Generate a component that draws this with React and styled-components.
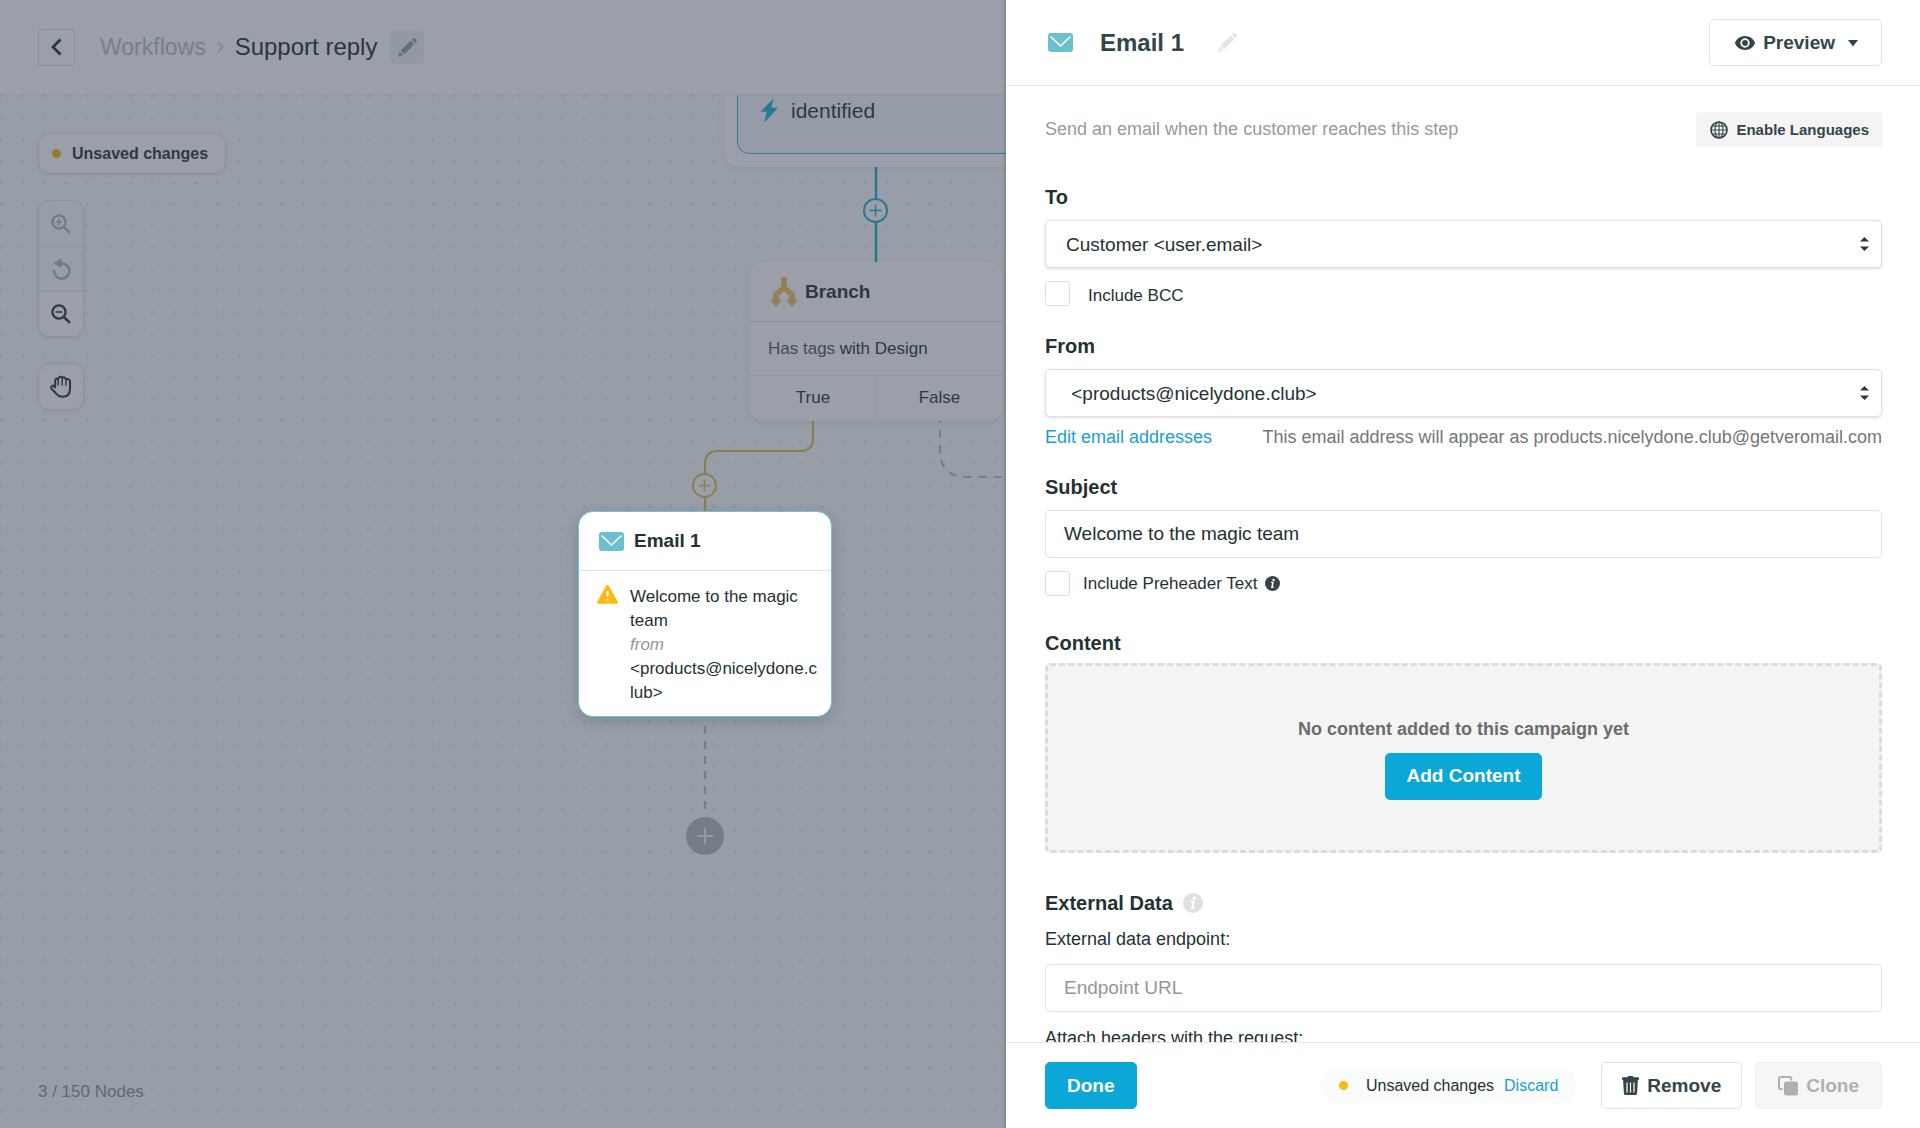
import React, { useState } from 'react'
import styled, { createGlobalStyle } from 'styled-components'

const GlobalStyle = createGlobalStyle`
  * { box-sizing:border-box; }
  body {
    margin:0;
    font-family:"Liberation Sans", Arial, Helvetica, sans-serif;
    color:#243133;
    background-color:#fff;
  }
  button, input, select { font-family:inherit; color:inherit; }
  button { cursor:pointer; }
`
const Page = styled.div`
  display:grid;
  grid-template-columns:503fr 457fr;
  height:100vh;
  overflow:hidden;
`

/* ---------- workflow side ---------- */
const Workflow = styled.main`
  position:relative;
  display:flex;
  flex-direction:column;
  min-width:0;
  overflow:hidden;
`
const Scrim = styled.div`
  position:absolute;
  inset:0;
  z-index:1;
  background-color:rgba(53,63,83,0.5);
`
const TopBar = styled.header`
  display:flex;
  align-items:center;
  height:95px;
  flex:none;
  padding:0 38px;
  background-color:#fff;
  border-bottom:1px solid #eceff0;
  box-shadow:0 1px 3px rgba(0,0,0,0.08);
`
const BackButton = styled.button`
  display:flex;
  align-items:center;
  justify-content:center;
  width:37px;
  height:37px;
  padding:0;
  background-color:#fff;
  border:1px solid #dcdfe0;
  border-radius:3px;
`
const Crumbs = styled.nav`
  display:flex;
  align-items:center;
  gap:11px;
  margin-left:25px;
  font-size:24px;
  line-height:32px;
`
const CrumbLink = styled.a`
  font-size:23px;
  color:#babec0;
  text-decoration:none;
`
const CrumbTitle = styled.span`
  color:#1c2a2c;
`
const EditButton = styled.button`
  display:flex;
  align-items:center;
  justify-content:center;
  width:34px;
  height:33px;
  margin-left:13px;
  padding:0;
  background-color:#f0f2f3;
  border:0;
  border-radius:4px;
  color:#9b9fa2;
`
const Canvas = styled.section`
  position:relative;
  flex:1;
  display:flex;
  flex-direction:column;
  align-items:flex-start;
  padding:38px 38px 16px 38px;
  background-color:#f9fdfd;
  overflow:hidden;
`
const Backdrop = styled.svg`
  position:absolute;
  top:0;
  left:0;
  width:100%;
  height:100%;
`
const Tools = styled.div`
  position:relative;
  flex:1;
  display:flex;
  flex-direction:column;
  align-items:flex-start;
  gap:26px;
`
const Status = styled.div`
  display:flex;
  align-items:center;
  gap:11px;
  height:41px;
  padding:0 17px 0 13px;
  background-color:#fff;
  border:1px solid #e0e4e6;
  border-radius:12px;
  box-shadow:0 1px 4px rgba(0,0,0,0.12);
  font-size:16px;
  font-weight:bold;
`
const Dot = styled.i`
  width:9px;
  height:9px;
  border-radius:50%;
  background-color:#fdb913;
`
const ToolGroup = styled.div`
  display:flex;
  flex-direction:column;
  width:46px;
  background-color:#fff;
  border:1px solid #e0e4e6;
  border-radius:12px;
  box-shadow:0 1px 4px rgba(0,0,0,0.12);
  overflow:hidden;
`
const ToolButton = styled.button`
  display:flex;
  align-items:center;
  justify-content:center;
  height:45px;
  padding:0;
  background-color:${props => props.disabled ? '#f9fcfc' : '#fff'};
  color:${props => props.disabled ? '#b2b6b9' : '#243133'};
  border:0;
  & + & { border-top:1px solid #e3e7e9; }
`
const NodeCount = styled.p`
  margin:auto 0 0 0;
  font-size:17px;
  line-height:40px;
  color:#8c9195;
`
const Node = styled.article`
  position:absolute;
  left:${props => props.$x}px;
  top:${props => props.$y}px;
  width:${props => props.$w || 254}px;
  z-index:${props => props.$active ? 2 : 0};
  background-color:#fff;
  border:1px solid ${props => props.$active ? '#6cc3d1' : '#fff'};
  border-radius:15px;
  box-shadow:${props => props.$active ? '0 4px 14px rgba(30,40,60,0.2)' : '0 2px 8px rgba(0,0,0,0.08)'};
`
const NodeHead = styled.h3`
  display:flex;
  align-items:center;
  gap:${props => props.$gap}px;
  height:59px;
  margin:0;
  padding:0 20px;
  border-bottom:1px solid #dde2e4;
  font-size:19px;
`
const NodeText = styled.p`
  margin:0;
  padding:0 18px;
  font-size:17px;
  line-height:53px;
  border-bottom:1px solid #e6eaec;
`
const Light = styled.span`
  color:#4c5759;
`
const Exits = styled.div`
  display:grid;
  grid-template-columns:1fr 1fr;
  font-size:17px;
  line-height:44px;
  text-align:center;
`
const Exit = styled.span`
  & + & { border-left:1px solid #e6eaec; }
`
const TriggerBox = styled.div`
  display:flex;
  align-items:center;
  gap:12px;
  height:99px;
  margin:0 12px;
  padding:12px 24px 0 22px;
  background-color:#f4f9fb;
  border:1px solid #45b4d2;
  border-radius:12px;
  font-size:21px;
`
const Trigger = styled(Node)`
  padding-bottom:12px;
`
const NodeBody = styled.div`
  display:flex;
  align-items:flex-start;
  gap:12px;
  padding:14px 13px 11px 18px;
  font-size:17px;
  line-height:24px;
`
const NodeCopy = styled.p`
  flex:1;
  min-width:0;
  margin:0;
  overflow-wrap:anywhere;
`
const From = styled.em`
  display:block;
  color:#8f9697;
`

/* ---------- panel side ---------- */
const Panel = styled.aside`
  position:relative;
  z-index:3;
  display:flex;
  flex-direction:column;
  min-width:0;
  min-height:0;
  background-color:#fff;
  box-shadow:-1px 0 3px rgba(30,40,60,0.3);
`
const PanelHead = styled.header`
  display:flex;
  align-items:center;
  flex:none;
  height:86px;
  padding:0 38px 0 42px;
  border-bottom:1px solid #e6e9e9;
`
const PanelTitle = styled.h2`
  margin:0 34px 0 27px;
  font-size:24px;
  color:#34454a;
`
const IconButton = styled.button`
  display:flex;
  padding:0;
  background:none;
  border:0;
  color:#e2e4e8;
`
const Button = styled.button`
  display:flex;
  align-items:center;
  justify-content:center;
  gap:8px;
  height:47px;
  padding:0 ${props => props.$primary ? 21 : 20}px;
  background-color:${props => props.$primary ? '#0ba7d6' : '#fff'};
  color:${props => props.$primary ? '#fff' : '#34454a'};
  border:1px solid ${props => props.$primary ? '#0ba7d6' : '#dfe2e3'};
  border-radius:5px;
  font-size:19px;
  font-weight:bold;
  &:disabled {
    padding:0 22px;
    background-color:#f6f6f6;
    border-color:#eeeeee;
    color:#b0b0b0;
  }
`
const PreviewButton = styled(Button)`
  margin-left:auto;
  padding:0 20px 0 25px;
`
const SmallButton = styled.button`
  display:flex;
  align-items:center;
  gap:8px;
  height:35px;
  padding:0 13px 0 14px;
  background-color:#f4f4f4;
  border:0;
  border-radius:3px;
  color:#34454a;
  font-size:15px;
  font-weight:bold;
`
const PanelBody = styled.form`
  flex:1;
  min-height:0;
  padding:26px 38px 0 39px;
  overflow-y:auto;
  scrollbar-width:none;
`
const Intro = styled.div`
  display:flex;
  align-items:center;
  justify-content:space-between;
  margin-bottom:38px;
  font-size:18px;
  color:#949b9c;
`
const Field = styled.div`
  display:flex;
  flex-direction:column;
  margin-bottom:${props => props.$space}px;
`
const Label = styled.label`
  display:flex;
  align-items:center;
  gap:8px;
  margin-bottom:11px;
  font-size:20px;
  font-weight:bold;
  line-height:24px;
`
const SubLabel = styled.label`
  display:block;
  margin:0 0 13px 0;
  font-size:18px;
  line-height:24px;
`
const SelectWrap = styled.div`
  display:grid;
  align-items:center;
  & > * { grid-area:1 / 1; }
  & > svg {
    justify-self:end;
    margin-right:13px;
    pointer-events:none;
  }
`
const Select = styled.select`
  appearance:none;
  width:100%;
  height:48px;
  padding:0 40px 0 20px;
  background-color:#fff;
  border:1px solid #dde1e2;
  border-radius:5px;
  box-shadow:0 1px 3px rgba(0,0,0,0.14);
  font-size:19px;
`
const Input = styled.input`
  width:100%;
  height:48px;
  padding:0 18px;
  background-color:#fff;
  border:1px solid #dfe1e2;
  border-radius:5px;
  font-size:19px;
  &::placeholder {
    color:#8f9899;
    opacity:1;
  }
`
const CheckRow = styled.div`
  display:flex;
  align-items:${props => props.$align || 'center'};
  gap:${props => props.$gap}px;
  height:25px;
  margin-top:13px;
  font-size:17px;
`
const Checkbox = styled.input`
  appearance:none;
  width:25px;
  height:25px;
  margin:0;
  background-color:#fff;
  border:1px solid #dcdfe1;
  border-radius:3px;
  &:checked { background-color:#0ba7d6; }
`
const CheckLabel = styled.label`
  display:flex;
  align-items:center;
  gap:7px;
`
const Hint = styled.div`
  display:flex;
  justify-content:space-between;
  margin-top:8px;
  font-size:18px;
  line-height:24px;
  color:#747676;
`
const TextLink = styled.a`
  color:#1a9fd0;
  text-decoration:none;
`
const Heading = styled.h3`
  display:flex;
  align-items:center;
  gap:10px;
  margin:0 0 ${props => props.$space}px 0;
  font-size:20px;
  line-height:24px;
`
const EmptyContent = styled.div`
  display:flex;
  flex-direction:column;
  align-items:center;
  justify-content:center;
  gap:12px;
  height:190px;
  margin-bottom:38px;
  background-color:#f4f4f4;
  border:3px dashed #dcdcdc;
  border-radius:5px;
`
const EmptyText = styled.p`
  margin:0;
  font-size:18px;
  font-weight:bold;
  line-height:24px;
  color:#6c6c6c;
`
const PanelFoot = styled.footer`
  display:flex;
  align-items:center;
  gap:13px;
  flex:none;
  height:86px;
  padding:0 38px 0 39px;
  border-top:1px solid #e4e9ea;
`
const Unsaved = styled.div`
  display:flex;
  align-items:center;
  height:35px;
  margin:0 12px 0 auto;
  padding:0 18px;
  background-color:#fafbfb;
  border-radius:17px;
  font-size:16px;
`
const UnsavedText = styled.span`
  margin:0 10px 0 18px;
`

/* ---------- icons ---------- */
const Envelope = () => (
  <svg width="25" height="19" viewBox="0 0 25 19" aria-hidden="true">
    <rect width="25" height="19" rx="3" fill="#6cc0ce"/>
    <path d="M3 4l9.500 9L22 4" fill="none" stroke="#fff" strokeWidth="1.600" strokeLinecap="round" strokeLinejoin="round"/>
  </svg>
)
const Pencil = () => (
  <svg width="19" height="19" viewBox="0 0 19 19" fill="currentColor" aria-hidden="true">
    <path d="M13.600 1.600l1-1c.7-.7 1.800-.7 2.500 0l1.200 1.200c.7.700.7 1.800 0 2.500l-1 1zM12.600 2.600l3.700 3.700L6.300 16.300 2.600 12.600zM1.800 13.800l3.300 3.300L.8 18.700c-.4.100-.7-.2-.6-.6z"/>
  </svg>
)
const ZoomIcon = ({ plus }) => (
  <svg width="20" height="20" viewBox="0 0 20 20" fill="none" stroke="currentColor" aria-hidden="true">
    <circle cx="8" cy="8" r="6.600" strokeWidth="2.300"/>
    <path d="M12.800 12.800l5.400 5.400" strokeWidth="2.500" strokeLinecap="round"/>
    <path d={plus ? 'M4.700 8h6.600M8 4.700v6.600' : 'M4.700 8h6.600'} strokeWidth="1.700"/>
  </svg>
)
const ResetIcon = () => (
  <svg width="19" height="22" viewBox="0 0 19 22" aria-hidden="true">
    <path d="M2 13a7.700 7.700 0 1 0 7.700-7.700H8" fill="none" stroke="currentColor" strokeWidth="2.600" strokeLinecap="round"/>
    <path d="M1.300 5.200L8.600.8c.5-.3 1 0 1 .5v7.500c0 .6-.6.9-1 .5z" fill="currentColor"/>
  </svg>
)
const HandIcon = () => (
  <svg width="22" height="23" viewBox="0 0 22 23" fill="none" stroke="currentColor" strokeLinecap="round" strokeLinejoin="round" aria-hidden="true">
    <path d="M5.200 12.500V5.200c0-1.300 1.800-1.900 2.700-1 .1-2.700 3.400-3 4.200-1.200 1.100-1.200 3.600-.6 3.800 1.300 1.400-.9 3.900-.2 4.100 2v7.500c0 5-2.700 8-7.300 8-3.200 0-5.200-1.300-6.700-3.300L1.600 13.800c-1.400-2.200 1.300-4 2.600-2.600z" strokeWidth="2"/>
    <path d="M8.300 4v6M12.200 3.500V10M16 4.800V10" strokeWidth="1.400"/>
  </svg>
)
const BoltIcon = () => (
  <svg width="19" height="25" viewBox="0 0 19 25" aria-hidden="true">
    <path d="M13.500.5L.6 13.800h5.900L4.500 24.500 18 9.800h-6.600z" fill="#1fb0d2"/>
  </svg>
)
const BranchIcon = () => (
  <svg width="28" height="30" viewBox="0 0 28 30" aria-hidden="true">
    <path d="M14 0v11M14 10.500L6 17.500V24M14 10.500l8 7V24" fill="none" stroke="#f0c353" strokeWidth="5.600"/>
    <path d="M0 22.500h12L6 30zM16 22.500h12L22 30z" fill="#f0c353"/>
  </svg>
)
const WarningIcon = () => (
  <svg width="21" height="19" viewBox="0 0 21 19" aria-hidden="true">
    <path d="M9 .9a1.700 1.700 0 0 1 3 0l8.700 15.900c.5 1-.1 1.900-1.100 1.900H1.400c-1 0-1.600-.9-1.100-1.900z" fill="#fdb913"/>
    <path d="M10.500 6v5.600M10.500 14v1.600" stroke="#fff" strokeWidth="2"/>
  </svg>
)
const EyeIcon = () => (
  <svg width="20" height="14" viewBox="0 0 20 14" aria-hidden="true">
    <path d="M10 0c4.600 0 8.200 2.800 9.800 6.200.2.500.2 1.100 0 1.600C18.200 11.200 14.600 14 10 14S1.800 11.200.2 7.800a2 2 0 0 1 0-1.600C1.800 2.800 5.400 0 10 0z" fill="currentColor"/>
    <circle cx="10" cy="7" r="3.800" fill="none" stroke="#fff" strokeWidth="1.800"/>
  </svg>
)
const CaretIcon = () => (
  <svg width="18" height="9" viewBox="-5 -2 18 9" aria-hidden="true">
    <path d="M0 0h10L5 6.500z" fill="currentColor"/>
  </svg>
)
const GlobeIcon = () => (
  <svg width="18" height="18" viewBox="0 0 18 18" fill="none" stroke="currentColor" aria-hidden="true">
    <circle cx="9" cy="9" r="8" strokeWidth="1.700"/>
    <ellipse cx="9" cy="9" rx="4" ry="8" strokeWidth="1.100"/>
    <path d="M9 1v16M1 9h16M2.300 5h13.400M2.300 13h13.400" strokeWidth="1.100"/>
  </svg>
)
const TrashIcon = () => (
  <svg width="17" height="19" viewBox="0 0 17 19" aria-hidden="true">
    <path d="M5.500 1.200C5.700.5 6.200 0 7 0h3c.8 0 1.300.5 1.500 1.200h4.200c.8 0 1.300.5 1.300 1.300v1.300h-1.100l-.8 13.400c-.1 1-.8 1.800-1.800 1.800H3.700c-1 0-1.700-.8-1.800-1.800L1.100 3.800H0V2.500c0-.8.500-1.300 1.300-1.300z" fill="currentColor"/>
    <path d="M5 6.500v10M8.500 6.500v10M12 6.500v10" stroke="#fff" strokeWidth="1.200"/>
  </svg>
)
const CloneIcon = () => (
  <svg width="20" height="20" viewBox="0 0 20 20" aria-hidden="true">
    <path d="M4.800 13.200H2.600c-.9 0-1.600-.7-1.600-1.600v-9C1 1.700 1.700 1 2.600 1h9c.9 0 1.600.7 1.600 1.600v2" fill="none" stroke="currentColor" strokeWidth="2"/>
    <rect x="6" y="5.500" width="14" height="14" rx="2.500" fill="currentColor"/>
  </svg>
)
const InfoIcon = ({ size, color }) => (
  <svg width={size} height={size} viewBox="0 0 20 20" aria-hidden="true">
    <circle cx="10" cy="10" r="10" fill={color}/>
    <circle cx="11.300" cy="5.200" r="1.600" fill="#fff"/>
    <path d="M8 8.500h2.700L9.200 15h2.400" fill="none" stroke="#fff" strokeWidth="1.900"/>
  </svg>
)
const SortArrows = () => (
  <svg width="9" height="14" viewBox="0 0 9 14" fill="#2b3840" aria-hidden="true">
    <path d="M0 4.500L4.500 0 9 4.500zM0 9.500L4.500 14 9 9.500z"/>
  </svg>
)

const CanvasLines = () => (
  <Backdrop aria-hidden="true">
    <defs>
      <pattern id="dots" x="-9.800" y="-9.500" width="21.600" height="21.600" patternUnits="userSpaceOnUse">
        <circle cx="10.800" cy="10.800" r="1.300" fill="#dbe1e3"/>
      </pattern>
    </defs>
    <rect width="100%" height="100%" fill="url(#dots)"/>
    <g fill="none" stroke="#1fb0d2" strokeWidth="2.500">
      <path d="M876 72v95"/>
      <circle cx="875.500" cy="115.500" r="11.500" fill="#fff" strokeWidth="2"/>
      <path d="M869.500 115.500h12M875.500 109.500v12" strokeWidth="1.500"/>
    </g>
    <g fill="none" stroke="#dcc04e" strokeWidth="2.200">
      <path d="M813 326v17q0 13-13 13h-82q-13 0-13 13v47"/>
      <circle cx="704.500" cy="390.500" r="11.500" fill="#fff" strokeWidth="2"/>
      <path d="M698.500 390.500h12M704.500 384.500v12" strokeWidth="1.500"/>
    </g>
    <g fill="none" stroke="#b8bdc2" strokeWidth="2.200" strokeDasharray="8 7">
      <path d="M940 326v29q0 27 27 27h60" strokeDashoffset="6"/>
      <path d="M705 631v90"/>
    </g>
    <circle cx="705" cy="741" r="19" fill="#b7bbbf"/>
    <path d="M697 741h16M705 733v16" stroke="#f4f6f7" strokeWidth="1.900"/>
  </Backdrop>
)

const App = () => {
  const [subject, setSubject] = useState('Welcome to the magic team')

  return (
    <Page>
      <GlobalStyle/>
      <Workflow>
        <TopBar>
          <BackButton aria-label="Back">
            <svg width="12" height="18" viewBox="0 0 12 18" aria-hidden="true">
              <path d="M9.500 1.500L2 9l7.500 7.500" fill="none" stroke="#1c2a2c" strokeWidth="2.800"/>
            </svg>
          </BackButton>
          <Crumbs>
            <CrumbLink href="#workflows">Workflows</CrumbLink>
            <svg width="7" height="12" viewBox="0 0 7 12" aria-hidden="true">
              <path d="M1 1l4.500 5L1 11" fill="none" stroke="#c6cacc" strokeWidth="1.300"/>
            </svg>
            <CrumbTitle>Support reply</CrumbTitle>
          </Crumbs>
          <EditButton aria-label="Rename workflow"><Pencil/></EditButton>
        </TopBar>

        <Canvas>
          <CanvasLines/>
          <Tools>
            <Status><Dot/>Unsaved changes</Status>
            <ToolGroup>
              <ToolButton disabled aria-label="Zoom in"><ZoomIcon plus/></ToolButton>
              <ToolButton disabled aria-label="Reset zoom"><ResetIcon/></ToolButton>
              <ToolButton aria-label="Zoom out"><ZoomIcon/></ToolButton>
            </ToolGroup>
            <ToolGroup>
              <ToolButton aria-label="Pan"><HandIcon/></ToolButton>
            </ToolGroup>
            <NodeCount>3 / 150 Nodes</NodeCount>
          </Tools>

          <Trigger $x={724} $y={-41} $w={304}>
            <TriggerBox><BoltIcon/>identified</TriggerBox>
          </Trigger>

          <Node $x={749} $y={167}>
            <NodeHead $gap={7}><BranchIcon/>Branch</NodeHead>
            <NodeText><Light>Has tags</Light> with Design</NodeText>
            <Exits>
              <Exit>True</Exit>
              <Exit>False</Exit>
            </Exits>
          </Node>

          <Node $x={578} $y={416} $active>
            <NodeHead $gap={10}><Envelope/>Email 1</NodeHead>
            <NodeBody>
              <WarningIcon/>
              <NodeCopy>
                Welcome to the magic team
                <From>from</From>
                &lt;products@nicelydone.club&gt;
              </NodeCopy>
            </NodeBody>
          </Node>
        </Canvas>
        <Scrim/>
      </Workflow>

      <Panel>
        <PanelHead>
          <Envelope/>
          <PanelTitle>Email 1</PanelTitle>
          <IconButton aria-label="Rename step"><Pencil/></IconButton>
          <PreviewButton>
            <EyeIcon/>
            Preview
            <CaretIcon/>
          </PreviewButton>
        </PanelHead>

        <PanelBody onSubmit={e => e.preventDefault()}>
          <Intro>
            Send an email when the customer reaches this step
            <SmallButton type="button"><GlobeIcon/>Enable Languages</SmallButton>
          </Intro>

          <Field $space={28}>
            <Label htmlFor="to">To</Label>
            <SelectWrap>
              <Select id="to">
                <option>Customer &lt;user.email&gt;</option>
              </Select>
              <SortArrows/>
            </SelectWrap>
            <CheckRow $gap={18} $align="flex-end">
              <Checkbox type="checkbox" id="bcc"/>
              <CheckLabel htmlFor="bcc">Include BCC</CheckLabel>
            </CheckRow>
          </Field>

          <Field $space={26}>
            <Label htmlFor="from">From</Label>
            <SelectWrap>
              <Select id="from">
                <option>{'\u00a0<products@nicelydone.club>'}</option>
              </Select>
              <SortArrows/>
            </SelectWrap>
            <Hint>
              <TextLink href="#addresses">Edit email addresses</TextLink>
              <span>This email address will appear as products.nicelydone.club@getveromail.com</span>
            </Hint>
          </Field>

          <Field $space={35}>
            <Label htmlFor="subject">Subject</Label>
            <Input id="subject" value={subject} onChange={e => setSubject(e.target.value)}/>
            <CheckRow $gap={13}>
              <Checkbox type="checkbox" id="preheader"/>
              <CheckLabel htmlFor="preheader">
                Include Preheader Text
                <InfoIcon size={15} color="#34454a"/>
              </CheckLabel>
            </CheckRow>
          </Field>

          <Heading $space={8}>Content</Heading>
          <EmptyContent>
            <EmptyText>No content added to this campaign yet</EmptyText>
            <Button type="button" $primary>Add Content</Button>
          </EmptyContent>

          <Heading $space={12}>
            External Data
            <InfoIcon size={20} color="#e0e0e0"/>
          </Heading>
          <Field $space={14}>
            <SubLabel htmlFor="endpoint">External data endpoint:</SubLabel>
            <Input id="endpoint" placeholder="Endpoint URL"/>
          </Field>
          <SubLabel as="p">Attach headers with the request:</SubLabel>
        </PanelBody>

        <PanelFoot>
          <Button $primary>Done</Button>
          <Unsaved>
            <Dot/>
            <UnsavedText>Unsaved changes</UnsavedText>
            <TextLink href="#discard">Discard</TextLink>
          </Unsaved>
          <Button><TrashIcon/>Remove</Button>
          <Button disabled><CloneIcon/>Clone</Button>
        </PanelFoot>
      </Panel>
    </Page>
  )
}

export default App
